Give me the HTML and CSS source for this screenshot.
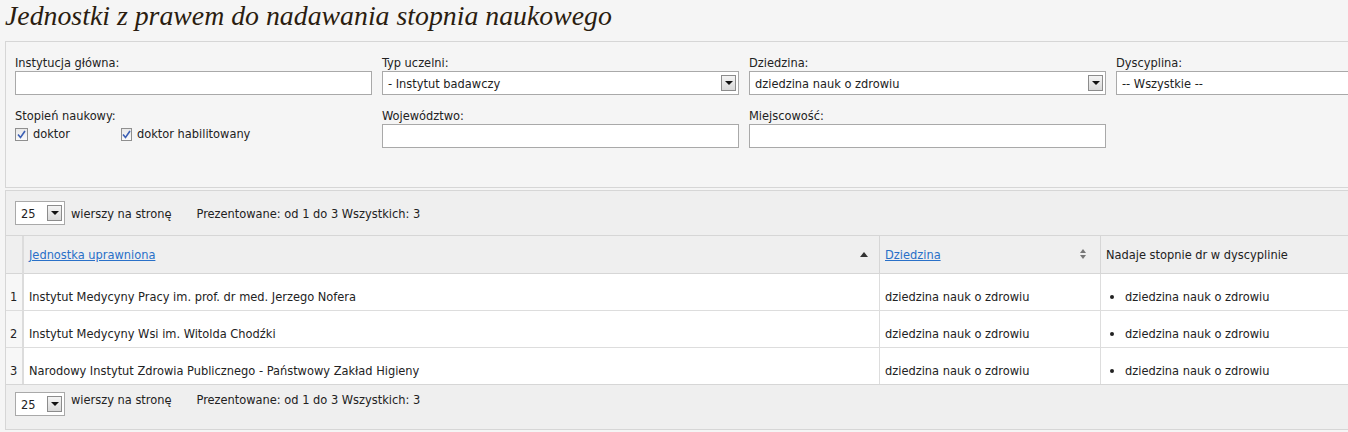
FILE: index.html
```html
<!DOCTYPE html>
<html lang="pl">

<head>
    <meta charset="UTF-8">
    <meta name="viewport" content="width=device-width, initial-scale=1.0">
    <link rel="stylesheet" href="styles.css">
    <title>Jednostki z prawem do nadawania stopnia naukowego</title>
</head>

<body>
    <h1 class="title">Jednostki z prawem do nadawania stopnia naukowego</h1>

    <div class="filters">
        <div class="field">
            <label>Instytucja główna:</label>
            <div class="textbox"></div>
        </div>
        <div class="field">
            <label>Typ uczelni:</label>
            <div class="combo"><span>- Instytut badawczy</span><span class="arrow"></span></div>
        </div>
        <div class="field">
            <label>Dziedzina:</label>
            <div class="combo"><span>dziedzina nauk o zdrowiu</span><span class="arrow"></span></div>
        </div>
        <div class="field">
            <label>Dyscyplina:</label>
            <div class="combo"><span>-- Wszystkie --</span><span class="arrow"></span></div>
        </div>

        <div class="field">
            <label>Stopień naukowy:</label>
            <div class="checks">
                <span class="check-item"><span class="check"><svg width="9" height="9" viewBox="0 0 9 9"><path d="M1 4.5 L3.5 7.5 L8 1" fill="none" stroke="#3b5fb4" stroke-width="1.6"/></svg></span>doktor</span>
                <span class="check-item"><span class="check"><svg width="9" height="9" viewBox="0 0 9 9"><path d="M1 4.5 L3.5 7.5 L8 1" fill="none" stroke="#3b5fb4" stroke-width="1.6"/></svg></span>doktor habilitowany</span>
            </div>
        </div>
        <div class="field">
            <label>Województwo:</label>
            <div class="textbox"></div>
        </div>
        <div class="field">
            <label>Miejscowość:</label>
            <div class="textbox"></div>
        </div>
    </div>

    <div class="results">
        <div class="pager">
            <div class="combo small"><span>25</span><span class="arrow"></span></div>
            <span>wierszy na stronę</span>
            <span class="info">Prezentowane: od 1 do 3 Wszystkich: 3</span>
        </div>

        <table class="grid">
            <thead>
                <tr>
                    <th class="num"></th>
                    <th class="col-name"><a href="#">Jednostka uprawniona</a><span class="sort-up"></span></th>
                    <th class="col-field"><a href="#">Dziedzina</a><span class="sort-both"></span></th>
                    <th class="col-disc">Nadaje stopnie dr w dyscyplinie</th>
                </tr>
            </thead>
            <tbody>
                <tr>
                    <td class="num">1</td>
                    <td>Instytut Medycyny Pracy im. prof. dr med. Jerzego Nofera</td>
                    <td>dziedzina nauk o zdrowiu</td>
                    <td><ul><li>dziedzina nauk o zdrowiu</li></ul></td>
                </tr>
                <tr>
                    <td class="num">2</td>
                    <td>Instytut Medycyny Wsi im. Witolda Chodźki</td>
                    <td>dziedzina nauk o zdrowiu</td>
                    <td><ul><li>dziedzina nauk o zdrowiu</li></ul></td>
                </tr>
                <tr>
                    <td class="num">3</td>
                    <td>Narodowy Instytut Zdrowia Publicznego - Państwowy Zakład Higieny</td>
                    <td>dziedzina nauk o zdrowiu</td>
                    <td><ul><li>dziedzina nauk o zdrowiu</li></ul></td>
                </tr>
            </tbody>
        </table>

        <div class="pager bottom">
            <div class="combo small"><span>25</span><span class="arrow"></span></div>
            <span>wierszy na stronę</span>
            <span class="info">Prezentowane: od 1 do 3 Wszystkich: 3</span>
        </div>
    </div>
</body>

</html>
```

FILE: styles.css
```css
html {
    overflow: hidden;
}

body {
    margin: 0;
    background: #f5f5f5;
    font-family: "DejaVu Sans Condensed", "DejaVu Sans", sans-serif;
    font-size: 12.7px;
    color: #222;
    width: 1500px;
}

.title {
    font-family: "Liberation Serif", serif;
    font-style: italic;
    font-weight: normal;
    font-size: 27.8px;
    line-height: 30px;
    color: #2b1d10;
    margin: 0;
    padding: 1px 0 0 5px;
    height: 41px;
    box-sizing: border-box;
}

/* filter panel */
.filters {
    margin-left: 5px;
    border: 1px solid #d6d6d6;
    background: #f5f5f5;
    display: grid;
    grid-template-columns: repeat(4, 357px);
    grid-template-rows: 40px 40px;
    column-gap: 10px;
    row-gap: 13px;
    padding: 13px 9px 0 9px;
    height: 147px;
    box-sizing: border-box;
}

.field label {
    display: block;
    line-height: 16px;
    color: #222;
}

.textbox {
    height: 24px;
    box-sizing: border-box;
    border: 1px solid #a9a9a9;
    background: #fff;
}

.combo {
    height: 24px;
    box-sizing: border-box;
    border: 1px solid #a9a9a9;
    background: #fff;
    display: flex;
    align-items: center;
    justify-content: space-between;
    padding: 0 2px 0 5px;
    color: #222;
}

.arrow {
    width: 15px;
    height: 16px;
    box-sizing: border-box;
    border: 1px solid #8c8c8c;
    background: linear-gradient(#f4f4f4, #d9d9d9);
    position: relative;
}

.arrow::after {
    content: "";
    position: absolute;
    left: 3px;
    top: 5px;
    border-left: 4px solid transparent;
    border-right: 4px solid transparent;
    border-top: 4px solid #111;
}

.checks {
    display: flex;
    padding-top: 2px;
}

.check-item {
    display: flex;
    align-items: center;
    width: 106px;
    white-space: nowrap;
    line-height: 16px;
}

.check {
    width: 13px;
    height: 13px;
    box-sizing: border-box;
    border: 1px solid #8f8f8f;
    background: linear-gradient(#e8e8e8, #fafafa);
    display: flex;
    align-items: center;
    justify-content: center;
    margin-right: 5px;
}

/* results */
.results {
    margin: 2px 0 0 5px;
    border: 1px solid #d6d6d6;
    background: #efefef;
}

.pager {
    display: flex;
    align-items: center;
    height: 44px;
    padding: 0 9px;
    border-bottom: 1px solid #d6d6d6;
}

.pager.bottom {
    border-bottom: none;
    border-top: 1px solid #d6d6d6;
    height: 45px;
    align-items: flex-start;
    padding-top: 7px;
    box-sizing: border-box;
}

.combo.small {
    width: 50px;
    margin-right: 6px;
}

.pager .info {
    margin-left: 25px;
}

.grid {
    border-collapse: collapse;
    table-layout: fixed;
    width: 100%;
}

.grid th {
    text-align: left;
    font-weight: normal;
    height: 37px;
    padding: 0 5px;
    border-right: 1px solid #d6d6d6;
    border-bottom: 1px solid #d6d6d6;
    background: #efefef;
    color: #222;
}

.grid th a {
    color: #2970c8;
}

.grid td {
    height: 30px;
    padding: 0 5px 6px 5px;
    vertical-align: bottom;
    background: #fff;
    border-top: 1px solid #dddddd;
    border-right: 1px solid #dddddd;
    white-space: nowrap;
}

.grid .num {
    width: 8px;
    padding-left: 4px;
    padding-right: 4px;
    border-right: 2px solid #dcdcdc;
    background: #efefef;
    color: #222;
}

.grid td.num {
    background: #f7f7f7;
}

.col-name {
    width: 845px;
    position: relative;
}

.col-field {
    width: 210px;
    position: relative;
}

.sort-up {
    position: absolute;
    right: 11px;
    top: 16px;
    border-left: 4px solid transparent;
    border-right: 4px solid transparent;
    border-bottom: 5px solid #333;
}

.sort-both {
    position: absolute;
    right: 14px;
    top: 13px;
    width: 0;
    height: 0;
    border-left: 3px solid transparent;
    border-right: 3px solid transparent;
    border-bottom: 4px solid #777;
}

.sort-both::after {
    content: "";
    position: absolute;
    left: -3px;
    top: 6px;
    border-left: 3px solid transparent;
    border-right: 3px solid transparent;
    border-top: 4px solid #777;
}

.grid ul {
    margin: 0;
    padding-left: 19px;
}
```
